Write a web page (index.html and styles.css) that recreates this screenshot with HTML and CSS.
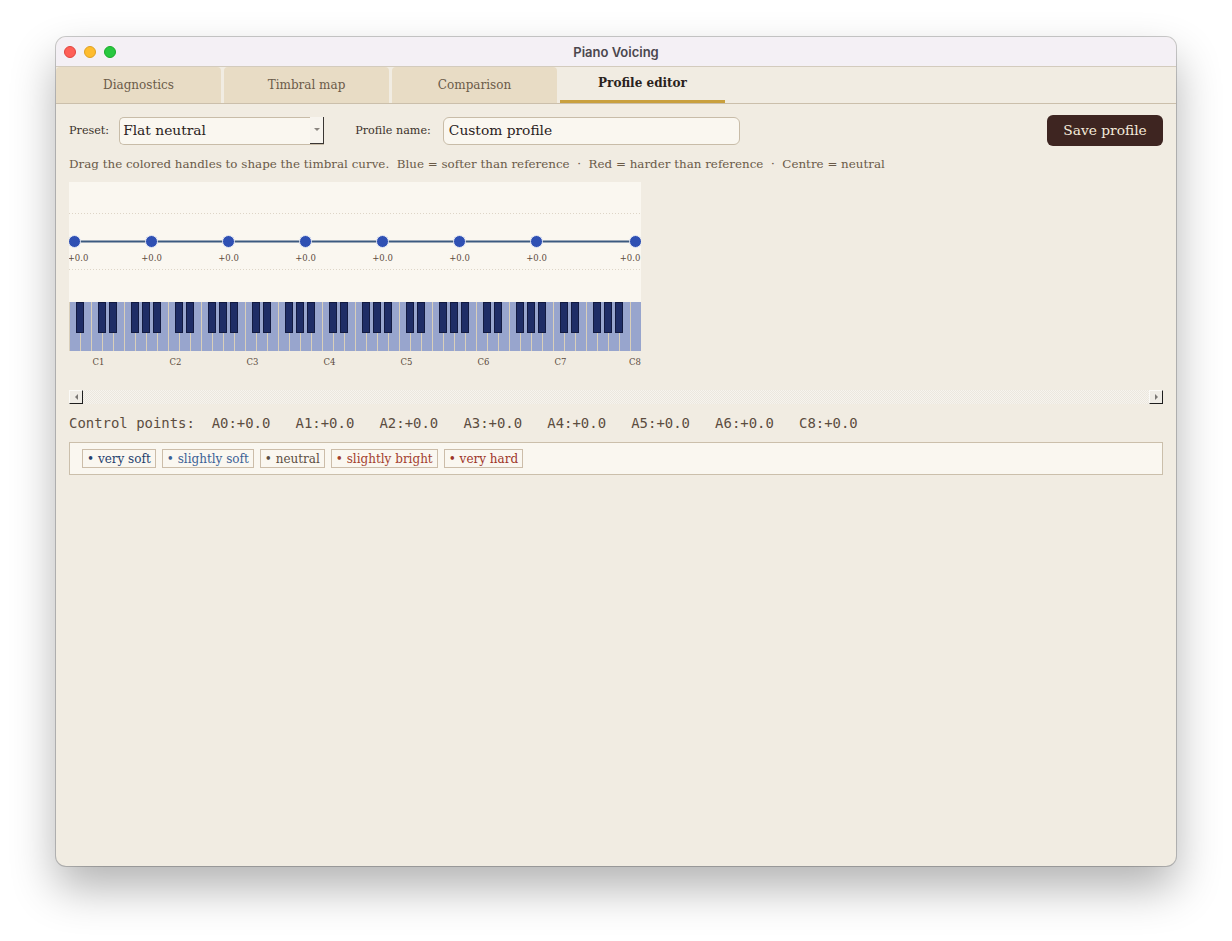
FILE: index.html
```html
<!DOCTYPE html>
<html lang="en">
<head>
<meta charset="UTF-8">
<title>Piano Voicing</title>
<link rel="stylesheet" href="styles.css">
</head>
<body>

<div class="desk">
<div class="window">
    <div class="titlebar">
        <div class="lights">
            <span class="light red"></span>
            <span class="light yellow"></span>
            <span class="light green"></span>
        </div>
        <div class="title">Piano Voicing</div>
    </div>

    <div class="tabs">
        <div class="tab">Diagnostics</div>
        <div class="tab">Timbral map</div>
        <div class="tab">Comparison</div>
        <div class="tab active">Profile editor</div>
    </div>

    <div class="content">
        <div class="toolbar">
            <span class="field-label">Preset:</span>
            <div class="select">
                <span class="select-value">Flat neutral</span>
                <span class="select-arrow"></span>
            </div>
            <span class="field-label name-label">Profile name:</span>
            <div class="text-input">Custom profile</div>
            <button class="save">Save profile</button>
        </div>

        <p class="hint">Drag the colored handles to shape the timbral curve.  Blue = softer than reference  ·  Red = harder than reference  ·  Centre = neutral</p>

        <svg class="curve" width="572" height="190" viewBox="0 0 572 190">
            <defs>
                <pattern id="whitekeys" patternUnits="userSpaceOnUse" x="0" y="120" width="11" height="49">
                    <rect x="0" y="0" width="1" height="49" fill="#d9cfba"/>
                </pattern>
                <pattern id="blackkeys" patternUnits="userSpaceOnUse" x="4" y="120" width="77" height="31">
                    <rect x="3.5" y="0.5" width="7" height="30" class="bk"/>
                    <rect x="25.5" y="0.5" width="7" height="30" class="bk"/>
                    <rect x="36.5" y="0.5" width="7" height="30" class="bk"/>
                    <rect x="58.5" y="0.5" width="7" height="30" class="bk"/>
                    <rect x="69.5" y="0.5" width="7" height="30" class="bk"/>
                </pattern>
            </defs>

            <rect x="0" y="0" width="572" height="169" fill="#faf7f0"/>
            <line x1="0" y1="31.5" x2="572" y2="31.5" class="grid"/>
            <line x1="0" y1="87.5" x2="572" y2="87.5" class="grid"/>

            <line x1="5.5" y1="59.5" x2="566.5" y2="59.5" class="trace"/>
            <circle cx="5.5" cy="59.5" r="6" class="handle"/>
            <circle cx="82.5" cy="59.5" r="6" class="handle"/>
            <circle cx="159.5" cy="59.5" r="6" class="handle"/>
            <circle cx="236.5" cy="59.5" r="6" class="handle"/>
            <circle cx="313.5" cy="59.5" r="6" class="handle"/>
            <circle cx="390.5" cy="59.5" r="6" class="handle"/>
            <circle cx="467.5" cy="59.5" r="6" class="handle"/>
            <circle cx="566.5" cy="59.5" r="6" class="handle"/>

            <text x="9" y="79" class="val">+0.0</text>
            <text x="82.5" y="79" class="val">+0.0</text>
            <text x="159.5" y="79" class="val">+0.0</text>
            <text x="236.5" y="79" class="val">+0.0</text>
            <text x="313.5" y="79" class="val">+0.0</text>
            <text x="390.5" y="79" class="val">+0.0</text>
            <text x="467.5" y="79" class="val">+0.0</text>
            <text x="561" y="79" class="val">+0.0</text>

            <rect x="0" y="120" width="572" height="49" fill="#98a5cd"/>
            <rect x="0" y="120" width="572" height="49" fill="url(#whitekeys)"/>
            <rect x="4" y="120" width="552" height="31" fill="url(#blackkeys)"/>

            <text x="23.5" y="183" class="oct">C1</text>
            <text x="100.5" y="183" class="oct">C2</text>
            <text x="177.5" y="183" class="oct">C3</text>
            <text x="254.5" y="183" class="oct">C4</text>
            <text x="331.5" y="183" class="oct">C5</text>
            <text x="408.5" y="183" class="oct">C6</text>
            <text x="485.5" y="183" class="oct">C7</text>
            <text x="560" y="183" class="oct">C8</text>
        </svg>

        <div class="hscroll">
            <span class="scroll-btn left"></span>
            <span class="scroll-track"></span>
            <span class="scroll-btn right"></span>
        </div>

        <div class="points">Control points:  A0:+0.0   A1:+0.0   A2:+0.0   A3:+0.0   A4:+0.0   A5:+0.0   A6:+0.0   C8:+0.0</div>

        <div class="legend">
            <span class="chip very-soft"><b>•</b> very soft</span>
            <span class="chip soft"><b>•</b> slightly soft</span>
            <span class="chip neutral"><b>•</b> neutral</span>
            <span class="chip bright"><b>•</b> slightly bright</span>
            <span class="chip hard"><b>•</b> very hard</span>
        </div>
    </div>
</div>
</div>

</body>
</html>
```

FILE: styles.css
```css
body {
    margin: 0;
    background-color: #ffffff;
    font-family: "DejaVu Serif", serif;
}
.desk {
    padding: 37px 56px 75px 56px;
}
.window {
    width: 1120px;
    height: 829px;
    box-sizing: border-box;
    background-color: #f1ece2;
    border-radius: 10px;
    overflow: hidden;
    box-shadow: 0 0 0 1px rgba(0, 0, 0, 0.2), 0 22px 45px rgba(0, 0, 0, 0.3);
    display: flex;
    flex-direction: column;
}

/* title bar */
.titlebar {
    height: 29px;
    background-color: #f4f0f5;
    border-bottom: 1px solid #d3cbbd;
    display: flex;
    align-items: center;
    position: relative;
    flex-shrink: 0;
}
.lights {
    display: flex;
    gap: 8px;
    padding-left: 8px;
}
.light {
    width: 12px;
    height: 12px;
    border-radius: 50%;
    box-sizing: border-box;
}
.light.red { background-color: #fe5f57; border: 1px solid #e0443e; }
.light.yellow { background-color: #febc2e; border: 1px solid #dea123; }
.light.green { background-color: #28c840; border: 1px solid #1aab29; }
.title {
    position: absolute;
    left: 0;
    right: 0;
    text-align: center;
    font-family: Inter, "Noto Sans", sans-serif;
    font-weight: 600;
    font-size: 13px;
    color: #4b474d;
}

/* tabs */
.tabs {
    display: flex;
    gap: 3px;
    height: 36px;
    border-bottom: 1px solid #cbbfab;
    flex-shrink: 0;
}
.tab {
    width: 165px;
    background-color: #e8dcc5;
    border-radius: 4px 4px 0 0;
    display: flex;
    align-items: center;
    justify-content: center;
    font-size: 12px;
    color: #6b5b49;
    padding-bottom: 1px;
    box-sizing: border-box;
}
.tab.active {
    background-color: transparent;
    font-weight: bold;
    color: #2a221c;
    padding-bottom: 1px;
    border-bottom: 3px solid #c9a03e;
}

/* content */
.content {
    padding: 11px 13px 0 13px;
}
.toolbar {
    display: flex;
    align-items: center;
    height: 31px;
}
.field-label {
    font-size: 11.2px;
    color: #3b322a;
    margin-right: 10px;
}
.name-label {
    margin-left: 31px;
    margin-right: 12px;
}
.select {
    width: 205px;
    height: 28px;
    box-sizing: border-box;
    border: 1px solid #c8bca8;
    border-right: none;
    border-radius: 5px 0 0 5px;
    background-color: #faf7f0;
    display: flex;
    align-items: center;
}
.select-value {
    flex: 1;
    padding-left: 3px;
    padding-bottom: 2px;
    font-size: 13.8px;
    color: #2a221c;
}
.select-arrow {
    width: 14px;
    height: 27px;
    margin-top: -1px;
    box-sizing: border-box;
    border-right: 1px solid #3a3633;
    border-bottom: 1px solid #3a3633;
    background-color: #f7f4ee;
    display: flex;
    align-items: center;
    justify-content: center;
}
.select-arrow::after {
    content: "";
    border-left: 3px solid transparent;
    border-right: 3px solid transparent;
    border-top: 3px solid #8a8580;
}
.text-input {
    width: 297px;
    height: 28px;
    box-sizing: border-box;
    border: 1px solid #c8bca8;
    border-radius: 6px;
    background-color: #faf7f0;
    padding-left: 5px;
    padding-bottom: 2px;
    font-size: 13.8px;
    color: #2a221c;
    display: flex;
    align-items: center;
}
.save {
    margin-left: auto;
    width: 116px;
    height: 31px;
    border: none;
    border-radius: 6px;
    background-color: #3e2521;
    color: #f4ebdb;
    font-family: "DejaVu Serif", serif;
    font-size: 13.8px;
    padding: 0 0 2px 0;
}
.hint {
    margin: 9px 0 0 0;
    line-height: 18px;
    font-size: 11.9px;
    color: #6a5a48;
    white-space: pre;
}

/* curve canvas */
.curve {
    display: block;
    margin-top: 9px;
}
.curve .grid {
    stroke: #ddd5c7;
    stroke-width: 1;
    stroke-dasharray: 1 2;
}
.curve .trace {
    stroke: #3c5a80;
    stroke-width: 2;
}
.curve .handle {
    fill: #2f50b3;
    stroke: #e6eaf4;
    stroke-width: 1;
}
.curve .bk {
    fill: #1f2d66;
    stroke: #131b42;
    stroke-width: 1;
}
.curve .val {
    font-family: "DejaVu Serif", serif;
    font-size: 8.5px;
    fill: #5a4a3c;
    text-anchor: middle;
}
.curve .oct {
    font-family: "DejaVu Serif", serif;
    font-size: 8.5px;
    fill: #5a4a3c;
}

/* scrollbar */
.hscroll {
    display: flex;
    height: 14px;
    margin-top: 18px;
}
.scroll-track {
    flex: 1;
    background: repeating-conic-gradient(#ebe7df 0 25%, #f7f4ee 0 50%) 0 0 / 2px 2px;
}
.scroll-btn {
    width: 14px;
    height: 14px;
    box-sizing: border-box;
    background-color: #efece6;
    border-right: 1px solid #1e1e1e;
    border-bottom: 1px solid #1e1e1e;
    border-top: 1px solid #fbfaf7;
    border-left: 1px solid #fbfaf7;
    display: flex;
    align-items: center;
    justify-content: center;
}
.scroll-btn.left::after {
    content: "";
    border-top: 3px solid transparent;
    border-bottom: 3px solid transparent;
    border-right: 3px solid #7a7774;
}
.scroll-btn.right::after {
    content: "";
    border-top: 3px solid transparent;
    border-bottom: 3px solid transparent;
    border-left: 3px solid #7a7774;
}

.points {
    margin-top: 9px;
    line-height: 20px;
    font-family: "DejaVu Sans Mono", monospace;
    font-size: 13.95px;
    color: #5c4d3f;
    white-space: pre;
}

/* legend */
.legend {
    margin-top: 9px;
    border: 1px solid #cbbfab;
    background-color: #faf7f0;
    padding: 6px 12px;
    display: flex;
    gap: 6px;
}
.chip {
    border: 1px solid #ccbda9;
    padding: 1px 4px 0 4px;
    line-height: 16px;
    font-size: 12px;
}
.chip b {
    font-weight: normal;
}
.chip.very-soft { color: #263f6d; }
.chip.soft { color: #3c6195; }
.chip.neutral { color: #5c4e42; }
.chip.bright { color: #a3402e; }
.chip.hard { color: #9d3427; }
```
